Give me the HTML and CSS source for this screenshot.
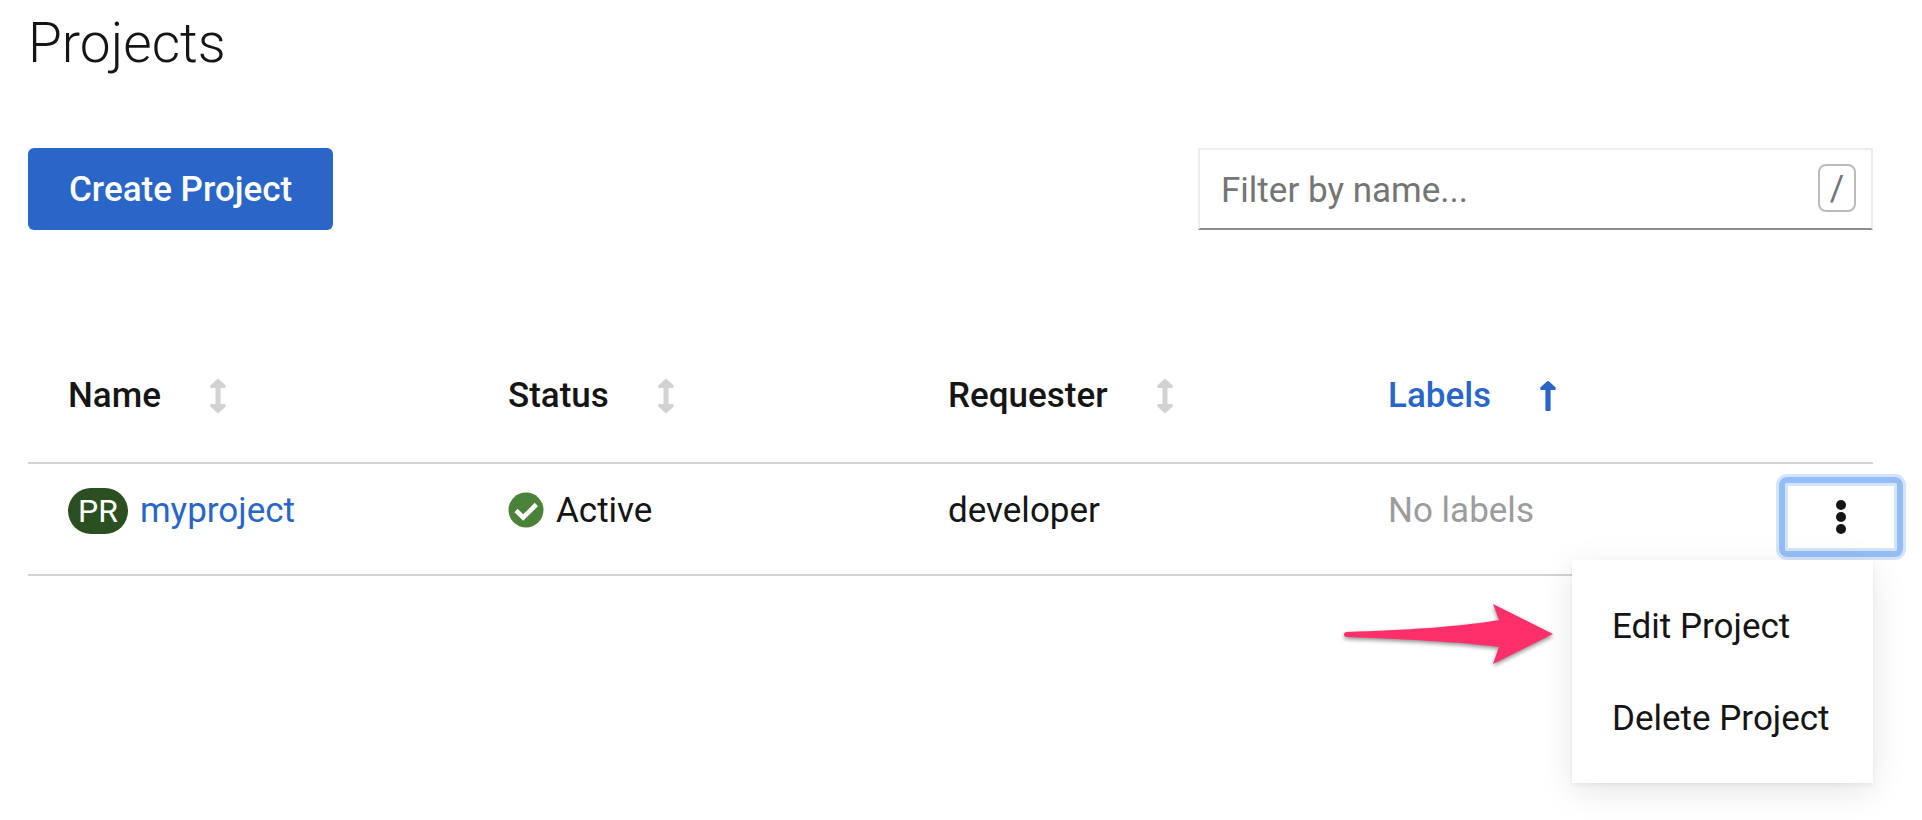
FILE: index.html
```html
<!DOCTYPE html>
<html lang="en">
<head>
<meta charset="utf-8">
<title>Projects</title>
<link rel="stylesheet" href="styles.css">
</head>
<body>
<main class="page">
  <h1 class="title">Projects</h1>
  <div class="toolbar">
    <button class="create" type="button">Create Project</button>
    <div class="filter">
      <input class="filter-input" type="text" placeholder="Filter by name..." aria-label="Filter by name">
      <kbd class="filter-key">/</kbd>
    </div>
  </div>
  <table class="projects">
    <colgroup><col><col><col><col><col class="col-actions"></colgroup>
    <thead>
      <tr>
        <th scope="col"><button class="sort" type="button">Name<svg class="sort-icon"><use href="#sort-both"/></svg></button></th>
        <th scope="col"><button class="sort" type="button">Status<svg class="sort-icon"><use href="#sort-both"/></svg></button></th>
        <th scope="col"><button class="sort" type="button">Requester<svg class="sort-icon"><use href="#sort-both"/></svg></button></th>
        <th scope="col" aria-sort="ascending"><button class="sort sort-active" type="button">Labels<svg class="sort-icon"><use href="#sort-up"/></svg></button></th>
        <td></td>
      </tr>
    </thead>
    <tbody>
      <tr>
        <td><div class="cell"><span class="badge">PR</span><a class="link" href="#">myproject</a></div></td>
        <td><div class="cell status">
          <svg class="status-icon" viewBox="0 0 36 36" aria-hidden="true"><circle cx="18" cy="17" r="17.500" fill="#4a8239"/><path d="M8 17.500L15.200 24.500L28.400 11.500" fill="none" stroke="#fff" stroke-width="4.600"/></svg>
          Active</div></td>
        <td><div class="cell">developer</div></td>
        <td><div class="cell muted">No labels</div></td>
        <td class="actions">
          <div class="dropdown">
            <button class="kebab" type="button" aria-label="Actions" aria-expanded="true">
              <svg class="kebab-icon" viewBox="0 0 10 34"><circle cx="5" cy="5" r="5"/><circle cx="5" cy="17" r="5"/><circle cx="5" cy="29" r="5"/></svg>
            </button>
            <div class="menu">
              <button class="menu-item" type="button">Edit Project</button>
              <button class="menu-item" type="button">Delete Project</button>
              <svg class="pointer" viewBox="0 0 209 60" aria-hidden="true"><path d="M3 28C60 26 115 23 155 16L149 0L209 30L149 60L155 43C115 38 60 35 3 33Q0 33 0 30.500Q0 28 3 28Z" fill="#ff2f6c"/></svg>
            </div>
          </div>
        </td>
      </tr>
    </tbody>
  </table>
</main>
<svg class="sprite" aria-hidden="true">
  <symbol id="sort-both" viewBox="0 0 16 34">
    <path d="M8 0Q8.700 0 9.400.7L15.400 6.300Q16.200 7.200 15.700 8.200Q15.400 9 14.500 9H10.500V25H14.500Q15.400 25 15.700 25.800Q16.200 26.800 15.400 27.700L9.400 33.300Q8.700 34 8 34Q7.300 34 6.600 33.300L.6 27.700Q-.2 26.800.3 25.800Q.6 25 1.500 25H5.500V9H1.500Q.6 9 .3 8.200Q-.2 7.200.6 6.300L6.600.7Q7.300 0 8 0Z"/>
  </symbol>
  <symbol id="sort-up" viewBox="0 0 16 34">
    <path d="M8 2Q8.700 2 9.400 2.700L15.400 8.300Q16.200 9.200 15.700 10.200Q15.400 11 14.500 11H10.600V31Q10.600 32 9.600 32H6.400Q5.400 32 5.400 31V11H1.500Q.6 11 .3 10.200Q-.2 9.200.6 8.300L6.600 2.700Q7.300 2 8 2Z"/>
  </symbol>
</svg>
</body>
</html>
```
FILE: styles.css
```css
* { box-sizing: border-box; }

body {
  margin: 0;
  background: #fff;
  color: #151515;
  font: 400 35px/48px Roboto, "Liberation Sans", sans-serif;
}

button, input, kbd { font: inherit; color: inherit; }

button { border: 0; background: none; cursor: pointer; }

.sprite { display: none; }

.page {
  min-height: 100vh;
  padding: 12px 49px 0 28px;
}

.title {
  margin: 0;
  font-size: 55px;
  font-weight: 300;
  line-height: 62px;
}

.toolbar {
  display: flex;
  justify-content: space-between;
  margin-top: 74px;
}

.create {
  height: 82px;
  padding: 2px 41px 0;
  border-radius: 6px;
  background: #2966c8;
  color: #fff;
  font-weight: 500;
}

.filter {
  position: relative;
  flex: 0 1 675px;
}

.filter-input {
  width: 100%;
  height: 82px;
  padding: 2px 72px 0 21px;
  border: 2px solid #ededed;
  border-bottom-color: #8a8d90;
  border-radius: 0;
  background: #fff;
}

.filter-input::placeholder { color: #757575; opacity: 1; }

.filter-key {
  position: absolute;
  top: 16px;
  right: 17px;
  width: 38px;
  height: 48px;
  border: 2px solid #bbb;
  border-radius: 8px;
  color: #72767b;
  line-height: 46px;
  text-align: center;
}

.projects {
  width: 100%;
  margin-top: 130px;
  border-collapse: separate;
  border-spacing: 0;
  table-layout: fixed;
}

.col-actions { width: 85px; }

.projects th, .projects td {
  padding: 0 0 0 40px;
  border-bottom: 2px solid #d2d2d2;
  text-align: left;
  vertical-align: top;
}

.projects th { padding-top: 12px; padding-bottom: 42px; }

.sort {
  display: flex;
  align-items: center;
  gap: 49px;
  padding: 0;
  font-weight: 500;
}

.sort-icon {
  width: 16px;
  height: 34px;
  fill: #d2d2d2;
}

.sort-active, .sort-active .sort-icon { color: #2966c8; fill: #2966c8; }

.cell {
  display: flex;
  align-items: center;
  gap: 12px;
  padding-top: 23px;
}

.badge {
  padding: 0 10px;
  border-radius: 23px;
  background: #2b4f20;
  color: #fff;
  font-size: 32px;
  line-height: 46px;
}

.link { color: #2966c8; text-decoration: none; }

.status-icon { width: 36px; height: 36px; overflow: visible; }

.muted { color: #9c9c9c; }

.projects .actions { padding: 13px 0 17px; }

.dropdown { position: relative; }

.kebab {
  display: flex;
  align-items: center;
  justify-content: center;
  width: 124px;
  height: 80px;
  margin-left: -9px;
  border: 6px solid #94bdf7;
  border-radius: 8px;
  box-shadow: 0 0 0 3px #d4e4fb, inset 0 0 0 3px #d4e4fb;
}

.kebab-icon { width: 10px; height: 34px; fill: #151515; }

.menu {
  position: absolute;
  z-index: 10;
  top: calc(100% + 3px);
  right: 0;
  width: 301px;
  padding: 21px 0 18px;
  background: #fff;
  box-shadow: 0 2px 4px rgba(3, 3, 3, .06), 0 8px 32px rgba(3, 3, 3, .1);
}

.menu-item {
  display: block;
  width: 100%;
  padding: 22px 40px;
  text-align: left;
  white-space: nowrap;
}

.pointer {
  position: absolute;
  top: 44px;
  right: 100%;
  width: 209px;
  height: 60px;
  margin-right: 19px;
  overflow: visible;
  filter: drop-shadow(0 2px 2px rgba(0, 0, 0, .45));
}
```
